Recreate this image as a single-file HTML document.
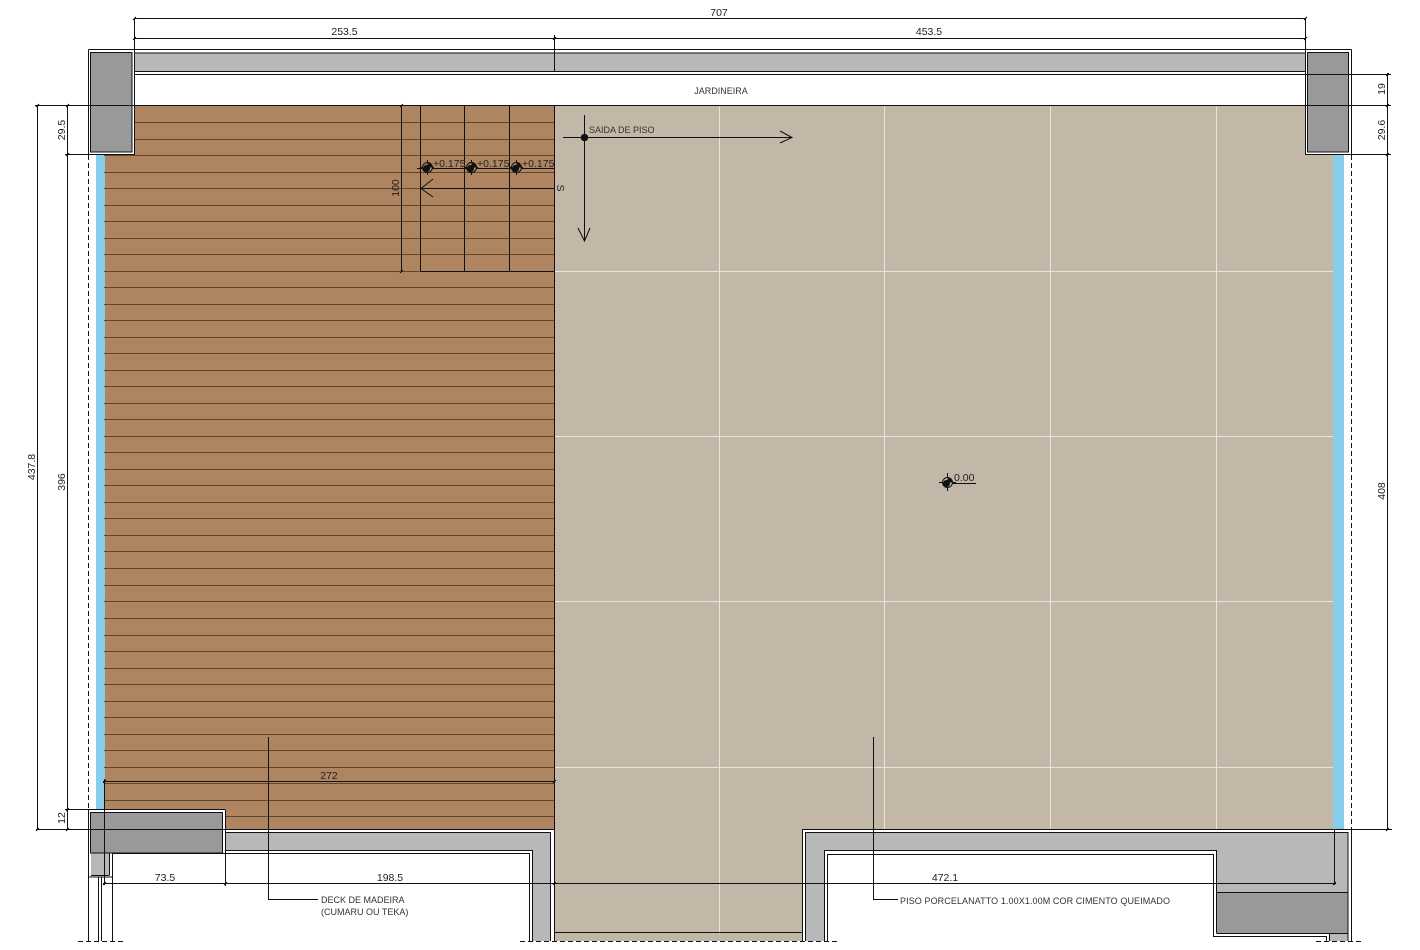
<!DOCTYPE html>
<html><head><meta charset="utf-8"><title>Planta</title>
<style>
html,body{margin:0;padding:0;background:#fff;width:1420px;height:950px;overflow:hidden}
svg{display:block}
text{font-family:"Liberation Sans",sans-serif;font-size:10.5px;fill:#222}
.s{font-size:9px;fill:#333}
</style></head><body>
<svg width="1420" height="950" viewBox="0 0 1420 950" xmlns="http://www.w3.org/2000/svg">
<rect width="1420" height="950" fill="#fff"/>
<!-- fills -->
<rect x="554" y="106" width="780" height="724" fill="#c3b7a8"/>
<rect x="554" y="830" width="249" height="111" fill="#c3b7a8"/>
<rect x="104" y="106" width="450" height="724" fill="#ae8560"/>
<rect x="96" y="154" width="9" height="656" fill="#87cce8"/>
<rect x="1333" y="154" width="11" height="676" fill="#87cce8"/>
<rect x="135" y="53" width="1170" height="18.5" fill="#b8b8b8"/>
<!-- tile lines -->
<path d="M719.5 106V934M884.5 106V830M1050.5 106V830M1216.5 106V830M554 271.5H1333M554 436.5H1333M554 601.5H1333M554 767.5H1333" stroke="#e8e3dc" stroke-width="1" fill="none" shape-rendering="crispEdges"/>
<!-- hatch -->
<path d="M104 122.500H554M104 139.500H554M104 155.500H554M104 172.500H554M104 188.500H554M104 205.500H554M104 221.500H554M104 238.500H554M104 254.500H554M104 271.500H554M104 287.500H554M104 304.500H554M104 320.500H554M104 337.500H554M104 353.500H554M104 370.500H554M104 386.500H554M104 403.500H554M104 419.500H554M104 436.500H554M104 452.500H554M104 469.500H554M104 485.500H554M104 502.500H554M104 518.500H554M104 535.500H554M104 551.500H554M104 568.500H554M104 585.500H554M104 601.500H554M104 618.500H554M104 635.500H554M104 651.500H554M104 668.500H554M104 684.500H554M104 701.500H554M104 717.500H554M104 734.500H554M104 750.500H554M104 767.500H554M104 783.500H554M104 800.500H554M104 816.500H554" stroke="#64452a" stroke-width="1" fill="none" shape-rendering="crispEdges"/>
<!-- walls gray -->
<path d="M225 833H550V941H532.500V851H225Z" fill="#b8b8b8"/>
<path d="M805.500 832H1348V892H1216.500V851H824V941H805.500Z" fill="#b8b8b8"/>
<rect x="1216.500" y="892" width="131.500" height="41" fill="#999"/>
<rect x="1329.500" y="933" width="18.500" height="8" fill="#b8b8b8"/>
<rect x="91" y="853" width="19" height="22" fill="#b8b8b8"/>
<!-- white column boxes -->
<rect x="88.500" y="50" width="46.500" height="104.500" fill="#fff"/>
<rect x="1305.500" y="50" width="46" height="104.500" fill="#fff"/>
<rect x="88.500" y="810" width="137" height="43" fill="#fff"/>
<!-- columns -->
<rect x="90.500" y="52.500" width="41.500" height="99.500" fill="#999" stroke="#111"/>
<rect x="1307.500" y="52.500" width="41" height="99.500" fill="#999" stroke="#111"/>
<rect x="90.500" y="812.500" width="132" height="40.500" fill="#999" stroke="#111"/>
<!-- black linework -->
<g fill="none" stroke="#111" stroke-width="1" shape-rendering="crispEdges">
<path d="M88.500 49.500H1351.500M135 53H1305M135 71.500H1305M135 74.500H1305M135 105.500H1305M134.500 18V154.500H88.500V49.500M1305.500 18V154.500H1351.500V49.500M554.500 35V71"/>
<path d="M134 18.500H1306M134 38.500H1306"/>
<path d="M554.500 105V941"/>
<path d="M35 105.500H135M65 154.500H135M1305 154.500H1391M1305 74.500H1391M1305 105.500H1391M65 809.500H225.500M36 829.500H225M1351 829.500H1392"/>
<path d="M37.500 105V830M67.500 105V830M1387.500 73V830"/>
<path d="M225.500 810V884M88.500 810V941M98.500 877V941M101.500 877V941M112.500 853V941M88.500 877H112M91 875.500H109.500M109.500 853V875M112 853.500H225"/>
<path d="M225 829.500H554M225 832.500H551M550.500 832V941M225 850.500H533M225 853.500H530M532.500 850V941M529.500 853V941"/>
<path d="M554 932.500H803M802.500 829.500V941M802 829.500H1351M805.500 832.500H1348M805.500 832V941M824.500 850.500H1216.500V933M827.500 854.500H1213.500V936.500H1326.500V941M824.500 850V941M827.500 854V941"/>
<path d="M1348 832V941M1351.500 829V941M1216.500 892.500H1348M1216.500 933.500H1348M1329.500 933V941"/>
<path d="M103 883.500H1336M104.500 779V885M103 781.500H555M1334.500 830V885M225.500 880V886"/>
<path d="M401.500 105V271M420.500 106V271M464.500 106V271M509.500 106V271M420 271.500H554"/>
<path d="M421 188.500H554M417 168.500H554"/>
<path d="M584.500 115V241M563 137.500H792M953 483.500H976"/>
<path d="M268.500 737V899.500H318M873.500 737V899.500H898"/>
</g>
<!-- dashed -->
<g fill="none" stroke="#111" stroke-dasharray="5 3" shape-rendering="crispEdges">
<path d="M88.500 155V810M1351.500 155V830"/>
<path d="M78 941.500H124M520 941.500H838M1316 941.500H1362"/>
</g>
<!-- arrows, ticks -->
<g fill="none" stroke="#111" stroke-width="1">
<path d="M433 179L421 188.500L433 197M578 228L584.500 241L590 228M780 131L792 137.500L780 143"/>
<path d="M133 20L136 17M133 40L136 37M1304 20L1307 17M1304 40L1307 37M553 40L556 37M36 107L39 104M66 107L69 104M66 156L69 153M66 811L69 808M36 831L39 828M66 831L69 828M1386 76L1389 73M1386 107L1389 104M1386 156L1389 153M1386 831L1389 828M103 783L106 780M553 783L556 780M103 885L106 882M224 885L227 882M553 885L556 882M1333 885L1336 882M400 107L403 104M400 273L403 270"/>
</g>
<!-- level markers -->
<g stroke="#111" fill="none">
<path d="M421 167.500H434M427.500 160V175"/><circle cx="427.500" cy="167.500" r="5" fill="#ae8560"/><path d="M427.500 167.500V162.500a5 5 0 0 1 5 5zM427.500 167.500V172.500a5 5 0 0 1-5-5z" fill="#111" stroke="none"/><circle cx="426.500" cy="168.500" r="3.500" fill="#111" stroke="none"/>
<path d="M465 167.500H478M471.500 160V175"/><circle cx="471.500" cy="167.500" r="5" fill="#ae8560"/><path d="M471.500 167.500V162.500a5 5 0 0 1 5 5zM471.500 167.500V172.500a5 5 0 0 1-5-5z" fill="#111" stroke="none"/><circle cx="470.500" cy="168.500" r="3.500" fill="#111" stroke="none"/>
<path d="M510 167.500H523M516.500 160V175"/><circle cx="516.500" cy="167.500" r="5" fill="#ae8560"/><path d="M516.500 167.500V162.500a5 5 0 0 1 5 5zM516.500 167.500V172.500a5 5 0 0 1-5-5z" fill="#111" stroke="none"/><circle cx="515.500" cy="168.500" r="3.500" fill="#111" stroke="none"/>
<path d="M939 482.500H956M947.500 473V491"/><circle cx="947.500" cy="482.500" r="5" fill="#c3b7a8"/><path d="M947.500 482.500V477.500a5 5 0 0 1 5 5zM947.500 482.500V487.500a5 5 0 0 1-5-5z" fill="#111" stroke="none"/><circle cx="946.500" cy="483.500" r="3.500" fill="#111" stroke="none"/>
<circle cx="584.500" cy="137.500" r="3.800" fill="#111" stroke="none"/>
</g>
<!-- text -->
<g text-anchor="middle">
<text x="719" y="16">707</text>
<text x="344.500" y="35">253.5</text>
<text x="929" y="35">453.5</text>
<text class="s" x="721" y="94">JARDINEIRA</text>
<text x="329" y="779">272</text>
<text x="165" y="881">73.5</text>
<text x="390" y="881">198.5</text>
<text x="945" y="881">472.1</text>
<text transform="translate(35,467) rotate(-90)">437.8</text>
<text transform="translate(65,482) rotate(-90)">396</text>
<text transform="translate(65,130) rotate(-90)">29.5</text>
<text transform="translate(65,818) rotate(-90)">12</text>
<text transform="translate(1385,89) rotate(-90)">19</text>
<text transform="translate(1385,130) rotate(-90)">29.6</text>
<text transform="translate(1385,491) rotate(-90)">408</text>
<text transform="translate(399,188) rotate(-90)">100</text>
<text transform="translate(557,188) rotate(90)">S</text>
</g>
<text x="433" y="167">+0.175</text>
<text x="477" y="167">+0.175</text>
<text x="522" y="167">+0.175</text>
<text x="954" y="481">0.00</text>
<text class="s" x="589" y="133">SAIDA DE PISO</text>
<text class="s" x="321" y="903">DECK DE MADEIRA</text>
<text class="s" x="321" y="915">(CUMARU OU TEKA)</text>
<text class="s" x="900" y="904" textLength="270">PISO PORCELANATTO 1.00X1.00M COR CIMENTO QUEIMADO</text>
</svg>
</body></html>
